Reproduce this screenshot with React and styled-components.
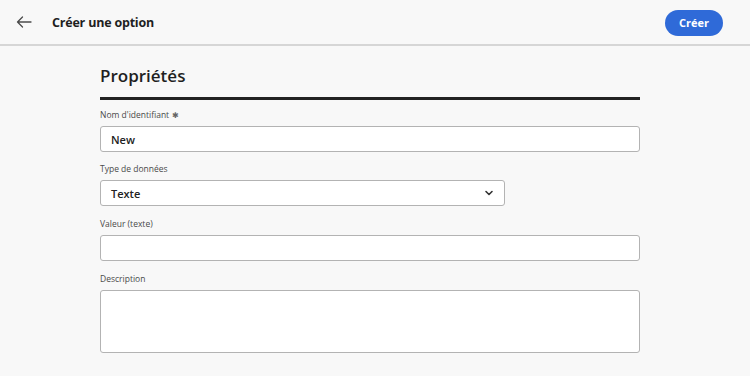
import styled, { createGlobalStyle } from "styled-components";

const Global = createGlobalStyle`
  body {
    margin: 0;
    background: #f8f8f8;
    font-family: "Open Sans", "Noto Sans", sans-serif;
    color: #2c2c2c;
  }
`;

const Page = styled.div`
  width: 750px;
  height: 376px;
  background: #f8f8f8;
  overflow: hidden;
`;

const Header = styled.header`
  height: 44px;
  display: flex;
  align-items: center;
  padding: 0 27px 0 16px;
  border-bottom: 2px solid #d6d6d6;
`;

const BackButton = styled.button`
  width: 16px;
  height: 16px;
  padding: 0;
  border: 0;
  background: none;
  display: flex;
  align-items: center;
  color: #4b4b4b;
  margin-right: 20px;
`;

const Title = styled.h1`
  flex: 1;
  margin: 0;
  font-size: 12.5px;
  font-weight: 700;
  letter-spacing: -0.2px;
  color: #1f1f1f;
`;

const PrimaryButton = styled.button`
  height: 26px;
  padding: 0 14px;
  border: 0;
  border-radius: 13px;
  background: #2f6ad8;
  color: #fff;
  font-family: inherit;
  font-size: 11px;
  font-weight: 700;
  margin-top: 1px;
`;

const Form = styled.main`
  width: 540px;
  margin: 0 auto;
  padding-top: 17px;
  display: flex;
  flex-direction: column;
  transform: translateX(-5px);
`;

const SectionTitle = styled.h2`
  margin: 0;
  font-size: 17px;
  font-weight: 600;
  color: #1f1f1f;
  line-height: 26px;
  padding-bottom: 8px;
  border-bottom: 3px solid #222;
`;

const Field = styled.div`
  display: flex;
  flex-direction: column;
  margin-top: ${(p) => p.$top ?? 12}px;
`;

const Label = styled.label`
  font-size: 8.5px;
  color: #4a4a4a;
  line-height: 12px;
  margin-bottom: 5px;
`;

const Required = styled.span`
  color: #666;
  margin-left: 3px;
  font-size: 7.5px;
`;

const Box = styled.div`
  width: ${(p) => p.$width || "100%"};
  height: ${(p) => p.$height || 26}px;
  box-sizing: border-box;
  background: #fff;
  border: 1px solid #b3b3b3;
  border-radius: 3px;
  display: flex;
  align-items: center;
  padding: 0 10px;
  font-size: 11px;
  font-weight: 600;
  color: #222;
  justify-content: space-between;
`;

const Chevron = () => (
  <svg width="10" height="10" viewBox="0 0 10 10">
    <path d="M2 3.5 L5 6.5 L8 3.5" fill="none" stroke="#333" strokeWidth="1.6" strokeLinecap="round" strokeLinejoin="round" />
  </svg>
);

export default function App() {
  return (
    <Page>
      <Global />
      <Header>
        <BackButton aria-label="Retour">
          <svg width="16" height="12" viewBox="0 0 16 12">
            <path d="M15 6 H1.5 M6.5 1 L1.5 6 L6.5 11" fill="none" stroke="#4b4b4b" strokeWidth="1.3" strokeLinecap="round" strokeLinejoin="round" />
          </svg>
        </BackButton>
        <Title>Créer une option</Title>
        <PrimaryButton>Créer</PrimaryButton>
      </Header>
      <Form>
        <SectionTitle>Propriétés</SectionTitle>
        <Field $top={9}>
          <Label>
            Nom d'identifiant<Required>✱</Required>
          </Label>
          <Box>New</Box>
        </Field>
        <Field $top={11}>
          <Label>Type de données</Label>
          <Box $width="405px">
            Texte
            <Chevron />
          </Box>
        </Field>
        <Field>
          <Label>Valeur (texte)</Label>
          <Box />
        </Field>
        <Field>
          <Label>Description</Label>
          <Box $height={63} />
        </Field>
      </Form>
    </Page>
  );
}
